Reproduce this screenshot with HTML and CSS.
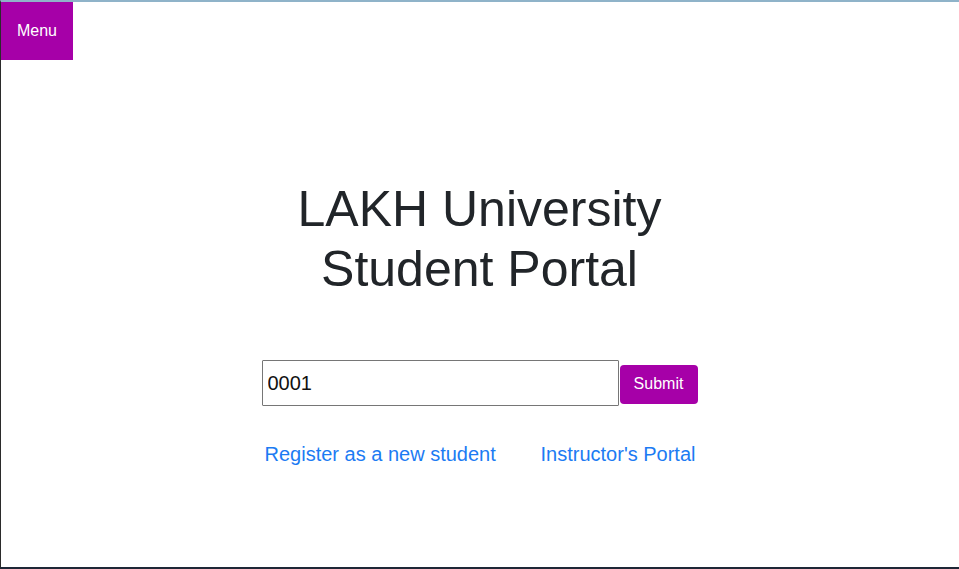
FILE: index.html
```html
<!DOCTYPE html>
<html lang="en">
<head>
<meta charset="utf-8">
<title>LAKH University Student Portal</title>
<link rel="stylesheet" href="styles.css">
</head>
<body>
<div class="frame">
  <header class="topbar">
    <button class="menu-btn" type="button">Menu</button>
  </header>
  <main class="portal">
    <h1 class="title">LAKH University<br>Student Portal</h1>
    <form class="login">
      <input class="id-input" type="text" value="0001">
      <button class="submit-btn" type="button">Submit</button>
    </form>
    <nav class="links">
      <a href="#" class="link">Register as a new student</a>
      <a href="#" class="link">Instructor's Portal</a>
    </nav>
  </main>
</div>
</body>
</html>
```

FILE: styles.css
```css
html, body {
  margin: 0;
  padding: 0;
  background: #ffffff;
}

body {
  font-family: "Liberation Sans", Arial, sans-serif;
  color: #212529;
}

.frame {
  box-sizing: border-box;
  width: 959px;
  height: 569px;
  border-top: 2px solid #8fb3c9;
  border-left: 1px solid #2b2b2b;
  border-bottom: 2px solid #1e2736;
  display: flex;
  flex-direction: column;
}

.topbar {
  display: flex;
}

.menu-btn {
  width: 72px;
  height: 58px;
  margin: 0;
  border: none;
  background: #a600a8;
  color: #ffffff;
  font-family: "Liberation Sans", Arial, sans-serif;
  font-size: 16px;
  padding: 0;
}

.portal {
  display: flex;
  flex-direction: column;
  align-items: center;
  margin-top: 119px;
  margin-right: 1px;
}

.title {
  margin: 0;
  font-size: 50px;
  font-weight: 400;
  line-height: 60px;
  text-align: center;
  color: #212529;
}

.login {
  display: flex;
  align-items: center;
  gap: 1px;
  margin: 61px 0 0 0;
  width: 436px;
}

.id-input {
  box-sizing: border-box;
  width: 357px;
  height: 46px;
  margin: 0;
  border: 1px solid #767676;
  padding: 0 5px;
  font-family: "Liberation Sans", Arial, sans-serif;
  font-size: 20px;
  color: #111111;
  border-radius: 1px;
}

.submit-btn {
  box-sizing: border-box;
  width: 78px;
  height: 39px;
  margin: 2px 0 0 0;
  border: none;
  border-radius: 4px;
  background: #a600a8;
  color: #ffffff;
  font-family: "Liberation Sans", Arial, sans-serif;
  font-size: 16px;
  padding: 0;
}

.links {
  box-sizing: border-box;
  display: flex;
  justify-content: space-between;
  width: 436px;
  padding: 0 2px 0 3px;
  margin-top: 33px;
  line-height: 30px;
}

.link {
  font-size: 20px;
  color: #1c7bf3;
  text-decoration: none;
}
```
